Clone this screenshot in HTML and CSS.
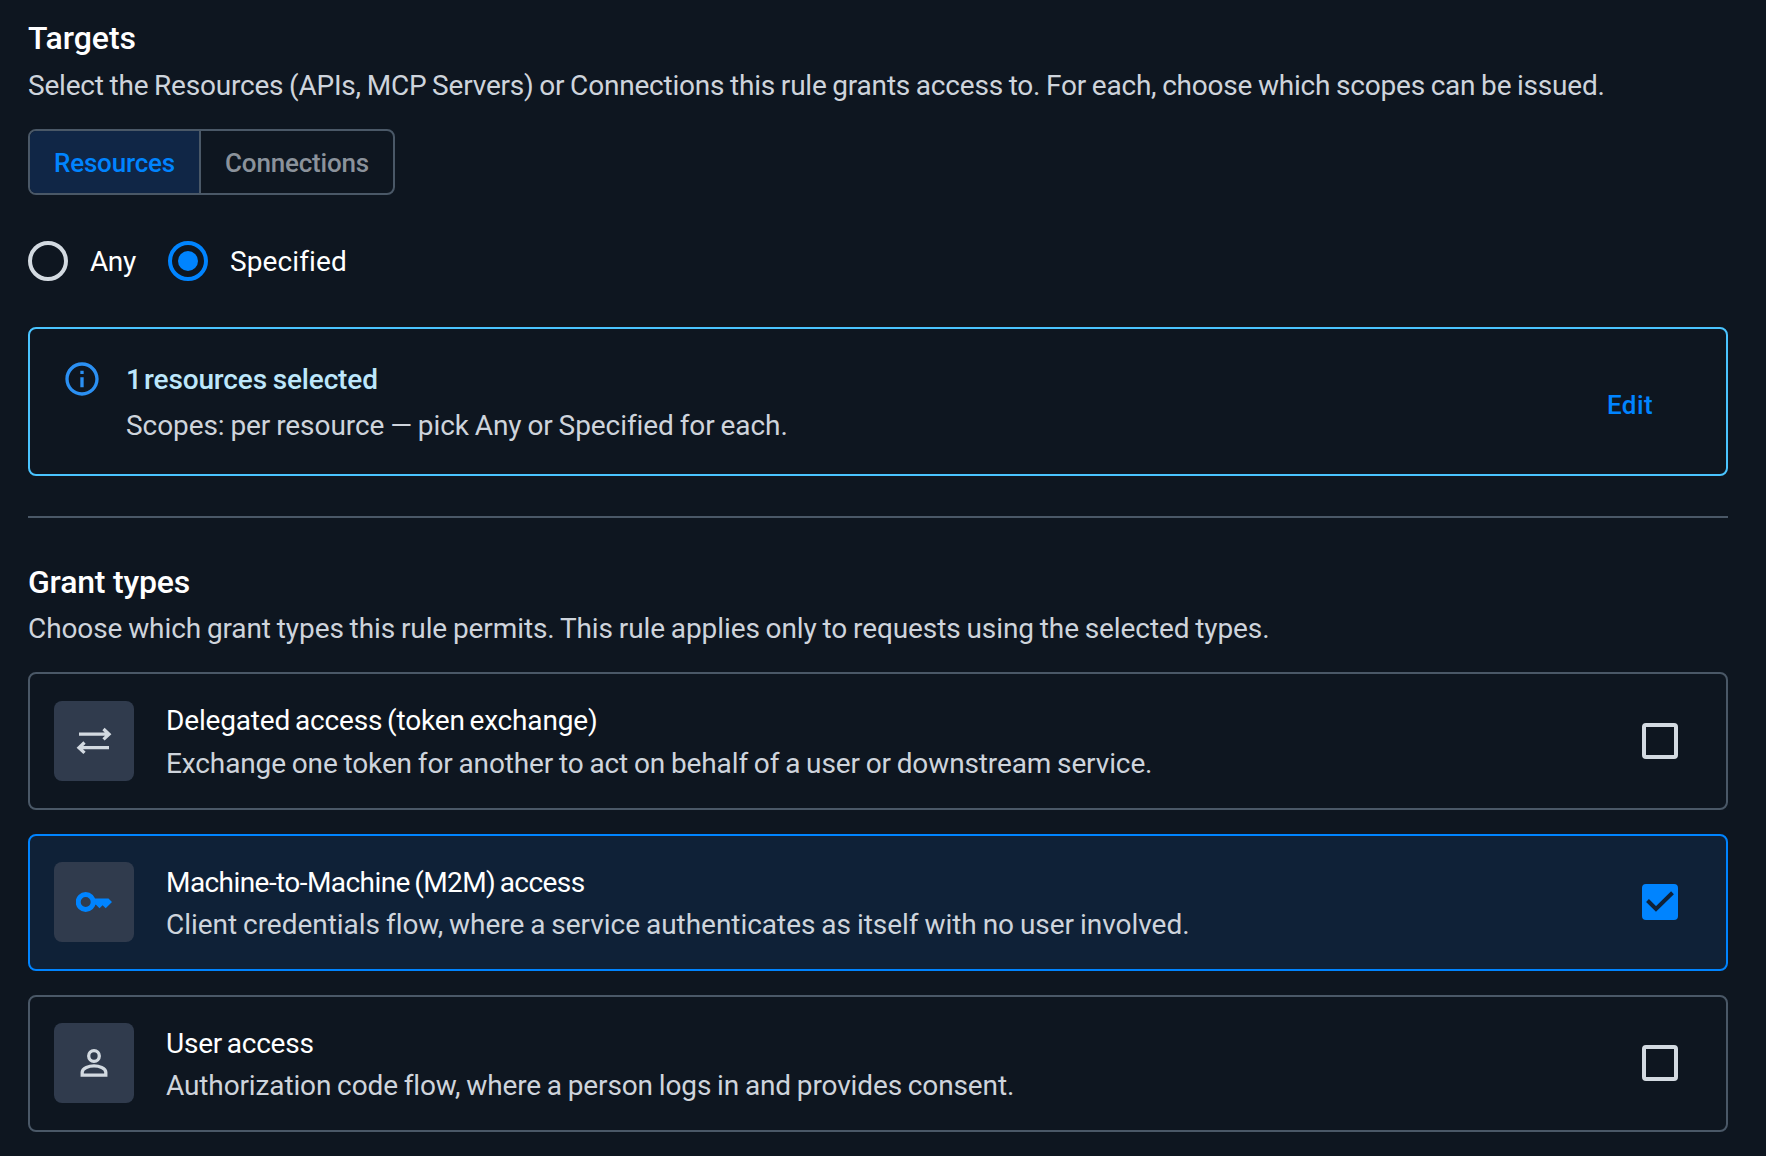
FILE: index.html
```html
<!DOCTYPE html>
<html lang="en">
<head>
    <meta charset="UTF-8">
    <meta name="viewport" content="width=device-width, initial-scale=1.0">
    <title>Access rule</title>
    <link rel="stylesheet" href="styles.css">
</head>
<body>
    <section class="targets">
        <h2>Targets</h2>
        <p class="description">Select the Resources (APIs, MCP Servers) or Connections this rule grants access to. For each, choose which scopes can be issued.</p>

        <div class="tabs">
            <button class="tab tab-active" type="button">Resources</button>
            <button class="tab" type="button">Connections</button>
        </div>

        <div class="radio-group">
            <label class="radio">
                <input type="radio" name="scope">
                <span>Any</span>
            </label>
            <label class="radio">
                <input type="radio" name="scope" checked>
                <span>Specified</span>
            </label>
        </div>

        <div class="notice">
            <svg class="notice-icon" viewBox="0 0 24 24"><path d="M11 7h2v2h-2zm0 4h2v6h-2zm1-9C6.48 2 2 6.48 2 12s4.48 10 10 10 10-4.48 10-10S17.52 2 12 2m0 18c-4.41 0-8-3.59-8-8s3.59-8 8-8 8 3.59 8 8-3.59 8-8 8"/></svg>
            <div class="notice-text">
                <strong><span class="count">1 </span>resources selected</strong>
                <p>Scopes: per resource — pick Any or Specified for each.</p>
            </div>
            <button class="edit" type="button">Edit</button>
        </div>
    </section>

    <hr>

    <section class="grants">
        <h2>Grant types</h2>
        <p class="description">Choose which grant types this rule permits. This rule applies only to requests using the selected types.</p>

        <div class="cards">
            <label class="card delegated">
                <span class="tile">
                    <svg viewBox="0 0 36 36" class="stroke"><path d="M3 11.200h30M27.500 6l5.500 5.200-5.500 5.200M33 24.700H3M8.500 19.500L3 24.700l5.500 5.200"/></svg>
                </span>
                <span class="card-text">
                    <span class="card-title">Delegated access (token exchange)</span>
                    <span class="card-info">Exchange one token for another to act on behalf of a user or downstream service.</span>
                </span>
                <input type="checkbox">
            </label>

            <label class="card machine card-selected">
                <span class="tile">
                    <svg viewBox="0 0 36 36"><path d="M18 14.500h14.500L36 18l-6.300 6.300-3.100-3.100-3.100 3.100-3.500-3.500h-2z"/><circle class="key-ring" cx="9.700" cy="18" r="7.500"/></svg>
                </span>
                <span class="card-text">
                    <span class="card-title">Machine-to-Machine (M2M) access</span>
                    <span class="card-info">Client credentials flow, where a service authenticates as itself with no user involved.</span>
                </span>
                <input type="checkbox" checked>
                <svg class="check" viewBox="0 0 36 36"><path d="M5.500 16.500l8.500 8.500L30.500 8.800"/></svg>
            </label>

            <label class="card user">
                <span class="tile">
                    <svg viewBox="0 0 36 36" class="stroke"><circle cx="18" cy="11" r="5.300"/><path d="M6.200 30.200v-3c0-4.200 7-6.400 11.800-6.400s11.800 2.200 11.800 6.400v3z"/></svg>
                </span>
                <span class="card-text">
                    <span class="card-title">User access</span>
                    <span class="card-info">Authorization code flow, where a person logs in and provides consent.</span>
                </span>
                <input type="checkbox">
            </label>
        </div>
    </section>
</body>
</html>
```
FILE: styles.css
```css
* {
    box-sizing: border-box;
}
body {
    margin: 0;
    padding: 14px 38px 0 28px;
    min-height: 1156px;
    font-family: Roboto, sans-serif;
    font-size: 28px;
    color: #fff;
    background-color: #0e1620;
}
h2 {
    margin: 0;
    font-size: 32px;
    line-height: 48px;
    font-weight: 500;
}
p {
    margin: 0;
}
button {
    font-family: inherit;
    font-size: 26px;
    font-weight: 500;
    background: none;
    border: none;
    padding: 0;
}
.description {
    line-height: 42px;
    color: #ced4dc;
    white-space: nowrap;
    word-spacing: -1px;
}
.targets .description {
    margin-top: 3px;
    letter-spacing: -0.205px;
}
.grants h2 {
    letter-spacing: -0.2px;
}
.grants .description {
    margin-top: 2px;
    letter-spacing: -0.095px;
}
.tabs {
    display: flex;
    width: 367px;
    height: 66px;
    margin-top: 22px;
    border: 2px solid #4a5867;
    border-radius: 8px;
    overflow: hidden;
}
.tab {
    flex: 1;
    padding-top: 2px;
    letter-spacing: -0.2px;
    color: #8b929b;
}
.tab-active {
    flex: none;
    width: 171px;
    color: #0084ff;
    background-color: #102646;
    border-right: 2px solid #4a5867;
}
.radio-group {
    display: flex;
    height: 40px;
    margin-top: 46px;
}
.radio {
    display: flex;
    align-items: center;
    gap: 22px;
    width: 140px;
    letter-spacing: -0.4px;
    white-space: nowrap;
}
input {
    appearance: none;
    flex: none;
    margin: 0;
    border: 4px solid #d3dae1;
}
.radio input {
    width: 40px;
    height: 40px;
    border-radius: 50%;
}
.radio input:checked {
    border-color: #0084ff;
    padding: 6px;
    background: #0084ff content-box;
}
.radio input:checked + span {
    letter-spacing: 0.12px;
}
.notice {
    display: flex;
    height: 149px;
    margin-top: 46px;
    padding: 28px 73px 0 32px;
    border: 2px solid #4ac4ff;
    border-radius: 8px;
}
.notice-icon {
    width: 40px;
    height: 40px;
    margin-top: 2px;
    fill: #2b90f3;
}
.notice-text {
    flex: 1;
    margin-left: 24px;
    line-height: 46px;
    color: #ced4dc;
}
.notice strong {
    font-weight: 500;
    letter-spacing: -0.15px;
    color: #bde7fb;
    word-spacing: -1px;
}
.notice .count {
    word-spacing: -4.5px;
}
.notice p {
    letter-spacing: -0.07px;
    word-spacing: -1px;
}
.edit {
    height: 96px;
    letter-spacing: 0.4px;
    color: #0084ff;
}
hr {
    height: 2px;
    margin: 40px 0;
    border: none;
    background-color: #4a5867;
}
.cards {
    display: grid;
    gap: 24px;
    margin-top: 22.22px;
}
.card {
    display: flex;
    align-items: center;
    height: 137.3px;
    padding: 0 48px 0 24px;
    border: 2px solid #4a5867;
    border-radius: 8px;
}
.card-selected {
    position: relative;
    border-color: #0084ff;
    background-color: #0f2137;
}
.tile {
    display: grid;
    place-items: center;
    width: 80px;
    height: 80px;
    border-radius: 8px;
    background-color: #303b4d;
}
.tile svg {
    width: 36px;
    height: 36px;
    fill: #0084ff;
}
.tile .stroke {
    fill: none;
    stroke: #d3dae1;
    stroke-width: 3.3;
}
.key-ring {
    fill: none;
    stroke: #0084ff;
    stroke-width: 5;
}
.card-text {
    display: flex;
    flex-direction: column;
    flex: 1;
    margin-left: 32px;
    padding-top: 4px;
    line-height: 42.5px;
    white-space: nowrap;
}
.card-title {
    word-spacing: -2px;
}
.card-info {
    color: #ced4dc;
    word-spacing: -1px;
}
.delegated .card-title {
    letter-spacing: -0.165px;
}
.delegated .card-info {
    letter-spacing: -0.12px;
}
.machine .card-title {
    letter-spacing: -0.57px;
}
.machine .card-info {
    letter-spacing: -0.03px;
}
.user .card-title {
    letter-spacing: -0.23px;
}
.user .card-info {
    letter-spacing: -0.125px;
}
.card input {
    width: 36px;
    height: 36px;
    border-radius: 4px;
}
.card input:checked {
    border-color: #0084ff;
    background-color: #0084ff;
}
/* sits on top of the checked box */
.check {
    position: absolute;
    right: 48px;
    width: 36px;
    height: 36px;
    fill: none;
    stroke: #0f2137;
    stroke-width: 4;
}
```
